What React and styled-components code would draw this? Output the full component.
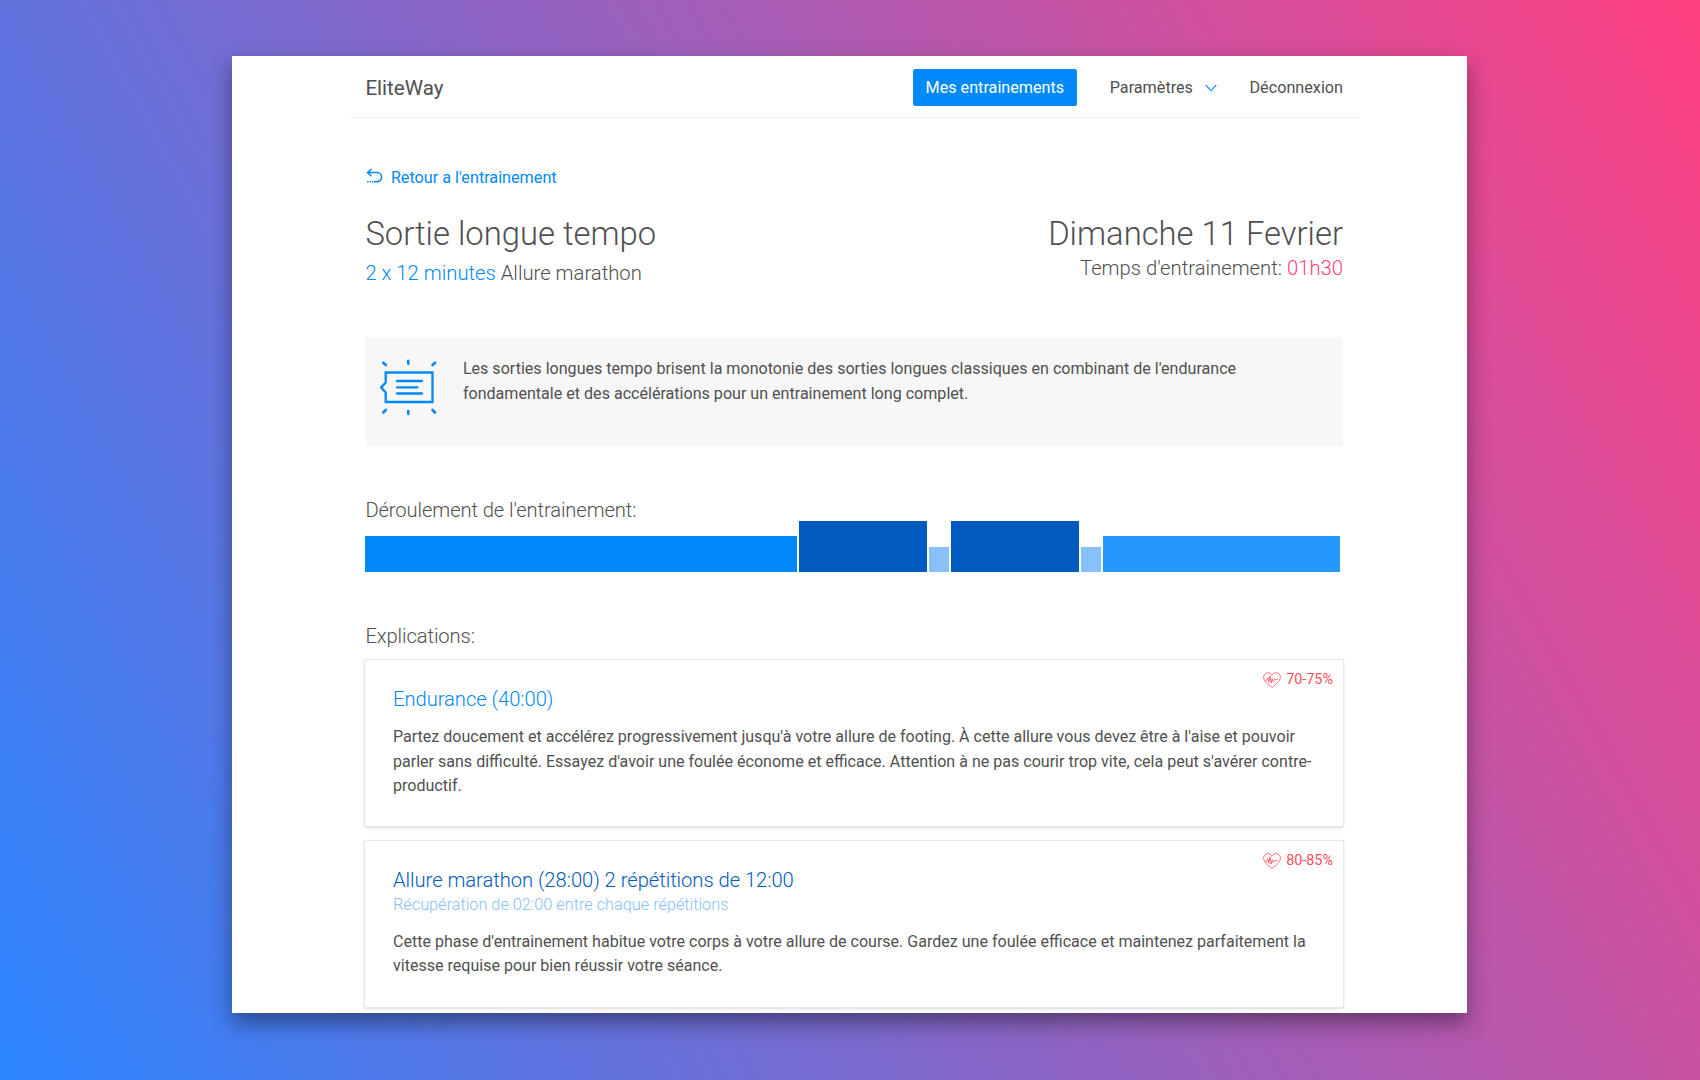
import React from 'react';
import styled, { createGlobalStyle } from 'styled-components';

const GlobalStyle = createGlobalStyle`
  * {
    box-sizing: border-box;
  }
  body {
    margin: 0;
    font-family: Roboto, sans-serif;
    font-size: 16.2px;
    line-height: 24.45px;
    color: #505050;
  }
  h1, h2, h3, p {
    margin: 0;
    font-weight: inherit;
  }
  a {
    color: inherit;
    text-decoration: none;
  }
`;

const Page = styled.div`
  height: 1080px;
  padding: 56px 233px 67px 232px;
  overflow: hidden;
  background: linear-gradient(61deg, #2a85ff, #ff4081);
`;

const Sheet = styled.div`
  height: 957px;
  background: #fff;
  box-shadow: 0 10px 20px rgba(0, 0, 0, 0.4);
`;

const Container = styled.div`
  width: 1010px;
  margin-left: 118px;
`;

const Navbar = styled.nav`
  display: flex;
  align-items: center;
  justify-content: space-between;
  height: 62px;
  padding: 2px 17px 0 15.4px;
  border-bottom: 1px solid #f2f2f2;
`;

const Brand = styled.a`
  padding-top: 1px;
  font-size: 20.6px;
`;

const NavLinks = styled.div`
  display: flex;
  align-items: center;
`;

const NavLink = styled.a`
  display: flex;
  align-items: center;
  gap: 12px;
  margin-left: 32.5px;
  padding-top: 1px;
`;

const NavButton = styled(NavLink)`
  height: 37px;
  margin-left: 0;
  padding: 1px 13px 0;
  border-radius: 2.5px;
  background: #0089fb;
  color: #fff;
`;

const Content = styled.main`
  padding: 48px 17px 0 15.4px;
`;

const BackLink = styled.a`
  display: flex;
  align-items: center;
  gap: 8.5px;
  color: #0089fb;

  svg {
    position: relative;
    top: -2px;
    left: 0.6px;
  }
`;

const Heading = styled.header`
  display: flex;
  justify-content: space-between;
  margin-top: 25px;
  font-weight: 300;
`;

const Side = styled.div`
  text-align: ${({ $right }) => ($right ? 'right' : 'left')};
`;

const Title = styled.h1`
  font-size: 32.8px;
  line-height: 39px;
  margin-bottom: ${({ $gap }) => $gap}px;
`;

const Lead = styled.p`
  font-size: 20.25px;
  line-height: 30px;
`;

const Accent = styled.span`
  color: ${({ $color }) => $color};
`;

const Info = styled.section`
  display: flex;
  gap: 25.5px;
  height: 109px;
  margin-top: 49px;
  padding: 20px 15px;
  background: #f7f7f7;
  font-size: 16.09px;

  svg {
    flex: none;
    margin-top: 2px;
  }
`;

const SectionTitle = styled.h2`
  font-size: 20.2px;
  line-height: 30px;
  font-weight: 300;
  letter-spacing: -0.1px;
  margin-top: ${({ $top }) => $top}px;
  margin-bottom: ${({ $bottom }) => $bottom}px;
`;

const Timeline = styled.div`
  display: flex;
  align-items: flex-end;
  gap: 2px;
  height: 51px;
`;

const Segment = styled.div`
  width: ${({ $width }) => $width}px;
  height: ${({ $height }) => $height}px;
  background: ${({ $color }) => $color};
`;

const Card = styled.article`
  position: relative;
  height: 166px;
  margin-bottom: 15px;
  padding: 26px 28px 0 27.6px;
  background: #fff;
  box-shadow: 0 0 0 1px #e8e8e8, 0 1px 3px rgba(0, 0, 0, 0.25);
`;

const CardTitle = styled.h3`
  font-size: 20.2px;
  line-height: 26px;
  font-weight: 300;
  letter-spacing: -0.04px;
  color: ${({ $color }) => $color};
`;

const Recovery = styled.p`
  font-size: 16.3px;
  font-weight: 300;
  line-height: 23px;
  color: #85bff9;
`;

const CardText = styled.p`
  margin-top: ${({ $top }) => $top}px;
  margin-right: -4px;
  font-size: 16.06px;
`;

const HeartRate = styled.div`
  position: absolute;
  top: 8px;
  right: 10px;
  display: flex;
  align-items: center;
  gap: 5px;
  font-size: 14.4px;
  color: #ff4d5a;

  svg {
    position: relative;
    top: -1px;
  }
`;

const BackIcon = () => (
  <svg width="17" height="16" viewBox="0 0 17 16" fill="none" stroke="#0089fb" strokeWidth="1.5">
    <path d="M5.5 1 1.5 4.5l4 3.7M1.8 4.5h9.2a4.6 4.6 0 0 1 0 9.2H8" />
    <path d="M1 13.7h7" strokeDasharray="1.5 1" />
  </svg>
);

const ChevronIcon = () => (
  <svg width="12" height="8" viewBox="0 0 12 8" fill="none" stroke="#2498fb" strokeWidth="1.3">
    <path d="m.7 1 5.3 5.6L11.3 1" />
  </svg>
);

const NoteIcon = () => (
  <svg width="57" height="57" viewBox="0 0 57 57" fill="none" stroke="#0089fb" strokeWidth="2.3" strokeLinecap="round">
    <path d="M5.700 13.500h46.800v29.500H5.700v-9.500L1.200 28.500l4.500-5z" />
    <path d="M17 22h25M17 28.300h20.500M17 34.500h25" />
    <path
      strokeWidth="2.600"
      d="M28.300 1.700v3M28.300 52v3M3.300 3.700l2.500 2.300M55 3.700 52.500 6M3.300 53.500 5.800 51M55 53.500 52.500 51"
    />
  </svg>
);

const HeartIcon = () => (
  <svg width="18" height="16" viewBox="0 0 18 16" fill="none" stroke="#ff4d5a" strokeWidth="0.8">
    <path d="M9 15.300C5.500 12.800.6 9.500.6 5.200.6 2.500 2.500.7 4.900.7 6.800.7 8.200 1.800 9 3.300 9.800 1.800 11.200.7 13.100.7c2.400 0 4.300 1.800 4.300 4.500 0 4.300-4.900 7.600-8.400 10.100z" />
    <path d="M2.200 8.300h1.600l1-2.600 1 4.600L7 3.800l1.100 7.400 1.100-4.400 1 2.600.9-1.800h3.600" />
  </svg>
);

const segments = [
  { width: 431.6, height: 36, color: '#0089fb' },
  { width: 128.3, height: 51, color: '#005abf' },
  { width: 19.7, height: 25.5, color: '#88c1fa' },
  { width: 128.3, height: 51, color: '#005abf' },
  { width: 20.2, height: 25.5, color: '#88c1fa' },
  { width: 236.3, height: 36, color: '#2498fb' },
];

const App = () => (
  <>
    <GlobalStyle />
    <Page>
      <Sheet>
        <Container>
          <Navbar>
            <Brand href="#">EliteWay</Brand>
            <NavLinks>
              <NavButton href="#">Mes entrainements</NavButton>
              <NavLink href="#">
                Paramètres
                <ChevronIcon />
              </NavLink>
              <NavLink href="#">Déconnexion</NavLink>
            </NavLinks>
          </Navbar>
          <Content>
            <BackLink href="#">
              <BackIcon />
              Retour a l'entrainement
            </BackLink>
            <Heading>
              <Side>
                <Title $gap={4}>Sortie longue tempo</Title>
                <Lead>
                  <Accent $color="#0089fb">2 x 12 minutes</Accent> Allure marathon
                </Lead>
              </Side>
              <Side $right>
                <Title $gap={-1}>Dimanche 11 Fevrier</Title>
                <Lead>
                  Temps d'entrainement: <Accent $color="#ff4081">01h30</Accent>
                </Lead>
              </Side>
            </Heading>
            <Info>
              <NoteIcon />
              <p>
                Les sorties longues tempo brisent la monotonie des sorties longues classiques en combinant de
                l'endurance fondamentale et des accélérations pour un entrainement long complet.
              </p>
            </Info>
            <SectionTitle $top={49} $bottom={-4}>Déroulement de l'entrainement:</SectionTitle>
            <Timeline>
              {segments.map((segment, index) => (
                <Segment key={index} $width={segment.width} $height={segment.height} $color={segment.color} />
              ))}
            </Timeline>
            <SectionTitle $top={49} $bottom={9}>Explications:</SectionTitle>
            <Card>
              <HeartRate>
                <HeartIcon />
                70-75%
              </HeartRate>
              <CardTitle $color="#0089fb">Endurance (40:00)</CardTitle>
              <CardText $top={13}>
                Partez doucement et accélérez progressivement jusqu'à votre allure de footing. À cette allure vous
                devez être à l'aise et pouvoir parler sans difficulté. Essayez d'avoir une foulée économe et efficace.
                Attention à ne pas courir trop vite, cela peut s'avérer contre-productif.
              </CardText>
            </Card>
            <Card>
              <HeartRate>
                <HeartIcon />
                80-85%
              </HeartRate>
              <CardTitle $color="#005abf">Allure marathon (28:00) 2 répétitions de 12:00</CardTitle>
              <Recovery>Récupération de 02:00 entre chaque répétitions</Recovery>
              <CardText $top={13.5}>
                Cette phase d'entrainement habitue votre corps à votre allure de course. Gardez une foulée efficace et
                maintenez parfaitement la vitesse requise pour bien réussir votre séance.
              </CardText>
            </Card>
          </Content>
        </Container>
      </Sheet>
    </Page>
  </>
);

export default App;
